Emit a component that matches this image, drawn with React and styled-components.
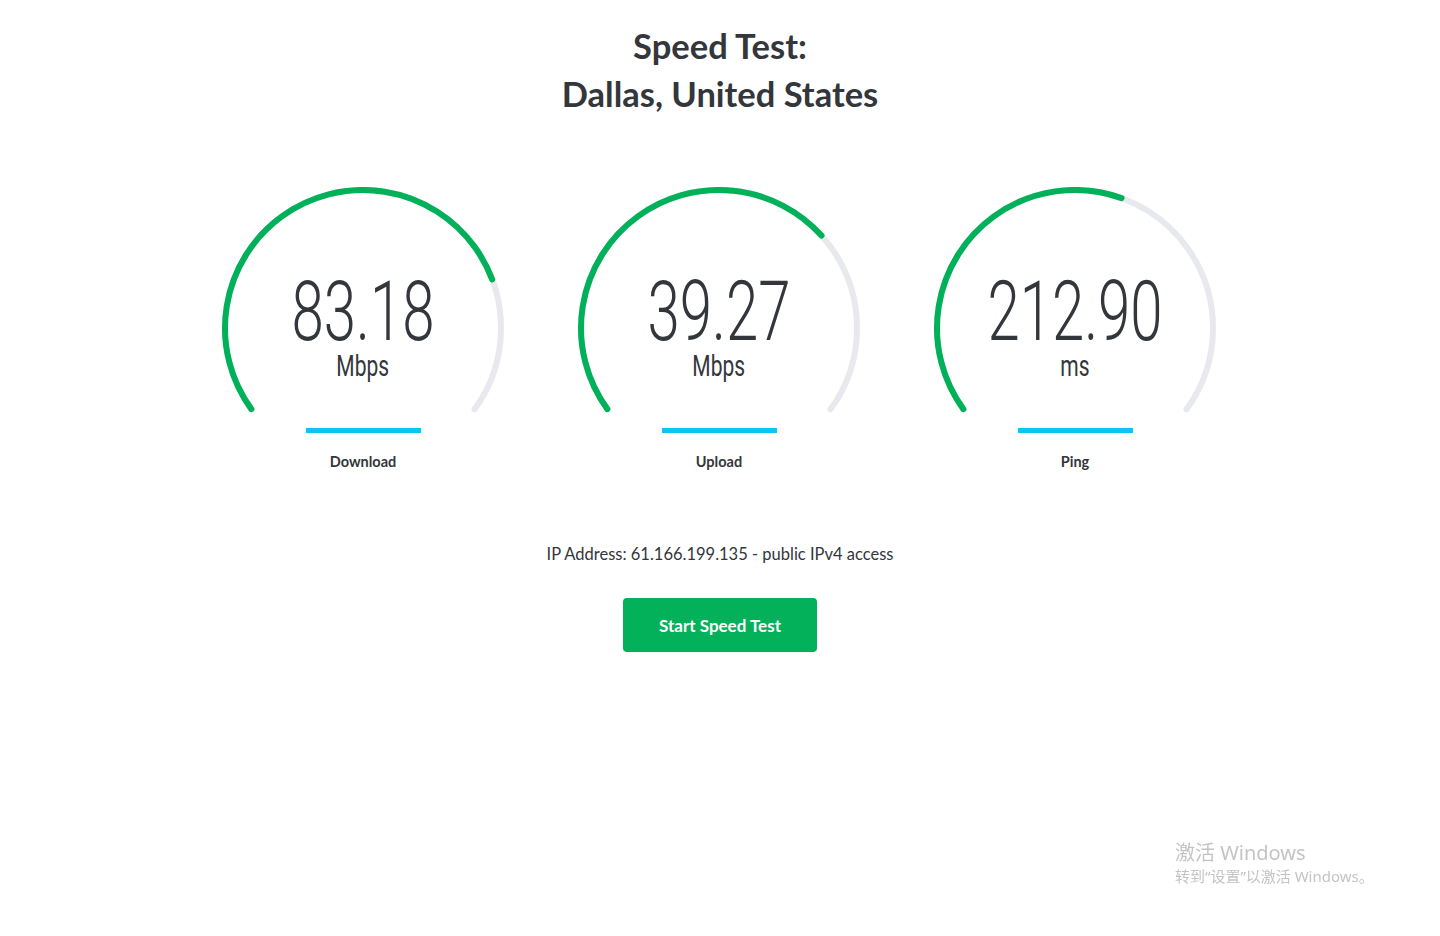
import React from 'react';
import styled, { createGlobalStyle } from 'styled-components';

const GlobalStyle = createGlobalStyle`
  html, body {
    margin: 0;
    padding: 0;
    background: #ffffff;
  }
  body {
    font-family: Lato, "Noto Sans", "Liberation Sans", sans-serif;
    color: #33363b;
  }
`;

const Page = styled.div`
  width: 1440px;
  min-height: 936px;
  display: flex;
  flex-direction: column;
  align-items: center;
  padding-top: 22px;
  box-sizing: border-box;
`;

const Title = styled.h1`
  margin: 0;
  font-size: 34.5px;
  line-height: 48px;
  font-weight: 700;
  text-align: center;
  color: #33363b;
`;

const Gauges = styled.div`
  display: grid;
  grid-template-columns: repeat(3, 356px);
  margin-top: 69px;
  margin-right: 2px;
`;

const Column = styled.div`
  display: flex;
  flex-direction: column;
  align-items: center;
`;

const Dial = styled.div`
  display: grid;
  width: 290px;
  height: 228px;
  & > * {
    grid-area: 1 / 1;
  }
`;

const Readout = styled.div`
  display: flex;
  flex-direction: column;
  align-items: center;
  align-self: start;
  padding-top: ${p => p.$top}px;
`;

const Number = styled.div`
  font-family: Roboto, "Liberation Sans", sans-serif;
  font-weight: 300;
  font-size: 83px;
  line-height: 64px;
  color: #33363b;
  transform: scaleX(0.7);
  white-space: nowrap;
`;

const Unit = styled.div`
  font-family: Roboto, "Liberation Sans", sans-serif;
  font-size: 30px;
  line-height: 30px;
  color: #33363b;
  transform: scaleX(0.7);
  margin-top: 7px;
`;

const Bar = styled.div`
  width: 115px;
  height: 5px;
  background: #0bc6f2;
  margin-top: 13px;
`;

const Label = styled.div`
  margin-top: 19px;
  font-size: 14.5px;
  line-height: 20px;
  font-weight: 700;
  color: #33363b;
`;

const Ip = styled.p`
  margin: 70px 0 0;
  font-size: 16.5px;
  line-height: 24px;
  color: #33363b;
`;

const StartButton = styled.button`
  margin-top: 32px;
  width: 194px;
  height: 54px;
  border: none;
  border-radius: 4px;
  background: #03b15a;
  color: #ffffff;
  font-family: Lato, "Noto Sans", sans-serif;
  font-size: 17px;
  font-weight: 700;
  cursor: pointer;
`;

const Watermark = styled.div`
  position: fixed;
  left: 1175px;
  top: 840px;
  color: #c4c4c4;
  font-family: "Noto Sans", "Noto Sans CJK SC", sans-serif;
  pointer-events: none;
`;

const WatermarkTitle = styled.div`
  font-size: 20px;
  line-height: 26px;
`;

const WatermarkSub = styled.div`
  font-size: 15px;
  line-height: 20px;
`;

const R = 138;
const C = 2 * Math.PI * R;
const SWEEP = 0.7;

const Gauge = ({ value }) => (
  <svg width="290" height="228" viewBox="0 0 290 228">
    <circle
      cx="145" cy="141" r={R}
      fill="none" stroke="#e8e9ee" strokeWidth="6" strokeLinecap="round"
      strokeDasharray={`${C * SWEEP} ${C}`}
      transform="rotate(144 145 141)"
    />
    <circle
      cx="145" cy="141" r={R}
      fill="none" stroke="#00b159" strokeWidth="6" strokeLinecap="round"
      strokeDasharray={`${C * SWEEP * value} ${C}`}
      transform="rotate(144 145 141)"
    />
  </svg>
);

const results = [
  { value: '83.18', unit: 'Mbps', label: 'Download', fill: 0.775 },
  { value: '39.27', unit: 'Mbps', label: 'Upload', fill: 0.69 },
  { value: '212.90', unit: 'ms', label: 'Ping', fill: 0.578 },
];

export default function App() {
  return (
    <>
      <GlobalStyle />
      <Page>
        <Title>
          Speed Test:
          <br />
          Dallas, United States
        </Title>
        <Gauges>
          {results.map(r => (
            <Column key={r.label}>
              <Dial>
                <Gauge value={r.fill} />
                <Readout $top={93}>
                  <Number>{r.value}</Number>
                  <Unit>{r.unit}</Unit>
                </Readout>
              </Dial>
              <Bar />
              <Label>{r.label}</Label>
            </Column>
          ))}
        </Gauges>
        <Ip>IP Address: 61.166.199.135 - public IPv4 access</Ip>
        <StartButton>Start Speed Test</StartButton>
      </Page>
      <Watermark>
        <WatermarkTitle>激活 Windows</WatermarkTitle>
        <WatermarkSub>转到“设置”以激活 Windows。</WatermarkSub>
      </Watermark>
    </>
  );
}
